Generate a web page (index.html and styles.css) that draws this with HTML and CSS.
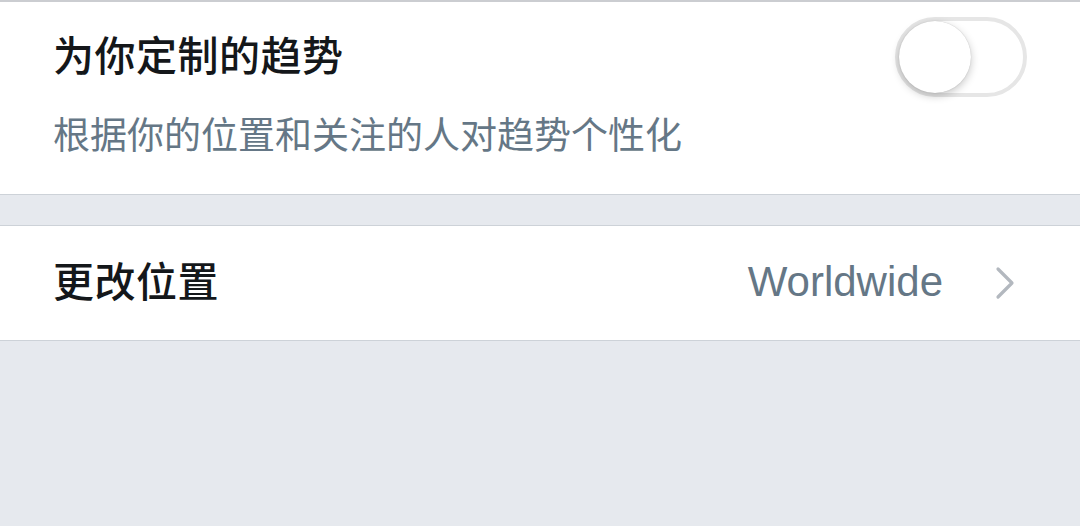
FILE: index.html
```html
<!DOCTYPE html>
<html lang="zh-CN">
<head>
    <meta charset="UTF-8">
    <meta name="viewport" content="width=device-width, initial-scale=1.0">
    <title>趋势设置</title>
    <link rel="stylesheet" href="styles.css">
</head>
<body>
    <div class="section">
        <div class="setting-head">
            <div class="setting-title">为你定制的趋势</div>
            <div class="switch" role="switch" aria-checked="false">
                <div class="knob"></div>
            </div>
        </div>
        <div class="setting-desc">根据你的位置和关注的人对趋势个性化</div>
    </div>

    <div class="spacer"></div>

    <div class="section row">
        <div class="setting-title">更改位置</div>
        <div class="row-value">
            <span class="value">Worldwide</span>
            <svg class="chevron" width="20" height="34" viewBox="0 0 20 34">
                <path d="M3 3 L17 17 L3 31" fill="none" stroke="#b3b8bf" stroke-width="3.2" stroke-linecap="round" stroke-linejoin="round"/>
            </svg>
        </div>
    </div>
</body>
</html>
```

FILE: styles.css
```css
body {
    margin: 0;
    background-color: #e6e9ee;
    font-family: "Noto Sans CJK SC", "Noto Sans", sans-serif;
    color: #14171a;
    border-top: 2px solid #cbcdd1;
}
.section {
    background-color: white;
    border-bottom: 1px solid #cdd2d8;
    padding: 15px 53px 34px 53px;
}
.setting-head {
    display: flex;
    align-items: center;
    justify-content: space-between;
}
.setting-title {
    font-size: 41px;
    font-weight: 500;
    line-height: 50px;
    letter-spacing: 0.5px;
    padding-bottom: 8px;
}
.setting-desc {
    margin-top: 11px;
    font-size: 37px;
    line-height: 50px;
    color: #657786;
    padding-bottom: 2px;
}
.switch {
    width: 124px;
    height: 72px;
    border: 4px solid #e6e6e6;
    border-radius: 40px;
    background-color: white;
    display: flex;
    align-items: center;
}
.knob {
    width: 72px;
    height: 72px;
    border-radius: 50%;
    background-color: white;
    box-shadow: 0 3px 8px rgba(0, 0, 0, 0.22), 0 0 1px rgba(0, 0, 0, 0.25);
}
.spacer {
    height: 30px;
    border-bottom: 1px solid #cdd2d8;
}
.row {
    display: flex;
    align-items: center;
    justify-content: space-between;
    height: 115px;
    padding: 0 65px 0 53px;
    box-sizing: border-box;
}
.row-value {
    display: flex;
    align-items: center;
    gap: 52px;
}
.value {
    font-family: "Liberation Sans", Arial, sans-serif;
    font-size: 42px;
    color: #657786;
    padding-bottom: 2px;
}
.chevron {
    display: block;
}
```
